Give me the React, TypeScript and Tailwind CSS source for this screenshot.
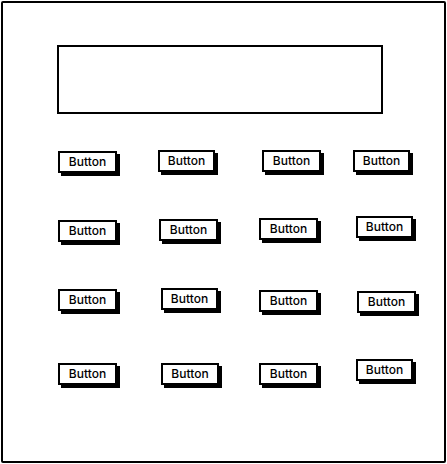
import React from "react";

type B = { dx: number; dy: number; w: number };

const rows: { top: string; btns: B[] }[] = [
  { top: "mt-[36px]", btns: [{ dx: 1, dy: 1, w: 59 }, { dx: 1, dy: 0, w: 57 }, { dx: 5, dy: 0, w: 59 }, { dx: -4, dy: 0, w: 57 }] },
  { top: "mt-[37px]", btns: [{ dx: 1, dy: 3, w: 59 }, { dx: 2, dy: 2, w: 59 }, { dx: 2, dy: 1, w: 59 }, { dx: -1, dy: -1, w: 57 }] },
  { top: "mt-[41px]", btns: [{ dx: 1, dy: 1, w: 59 }, { dx: 4, dy: 0, w: 57 }, { dx: 2, dy: 2, w: 59 }, { dx: 0, dy: 3, w: 59 }] },
  { top: "mt-[41px]", btns: [{ dx: 1, dy: 4, w: 59 }, { dx: 4, dy: 4, w: 58 }, { dx: 2, dy: 4, w: 59 }, { dx: -1, dy: 0, w: 57 }] },
];

function Btn({ b }: { b: B }) {
  return (
    <div className="w-[100px] shrink-0">
      <div
        className="h-[22px] border-2 border-black bg-white shadow-[3px_3px_0_#000] flex items-center justify-center text-[12px] leading-none text-black"
        style={{ marginLeft: b.dx, marginTop: b.dy, width: b.w, fontFamily: "Inter, 'Noto Sans', sans-serif", fontWeight: 500 }}
      >
        Button
      </div>
    </div>
  );
}

export default function App() {
  return (
    <div className="w-[447px] h-[464px] bg-white p-[1px]">
      <div className="w-[445px] h-[462px] border-2 border-black rounded-[2px] flex flex-col">
        <div className="ml-[54px] mt-[42px] w-[326px] h-[69px] border-2 border-black" />
        {rows.map((r, i) => (
          <div key={i} className={`flex ml-[54px] h-[30px] ${r.top}`}>
            {r.btns.map((b, j) => (
              <Btn key={j} b={b} />
            ))}
          </div>
        ))}
      </div>
    </div>
  );
}
